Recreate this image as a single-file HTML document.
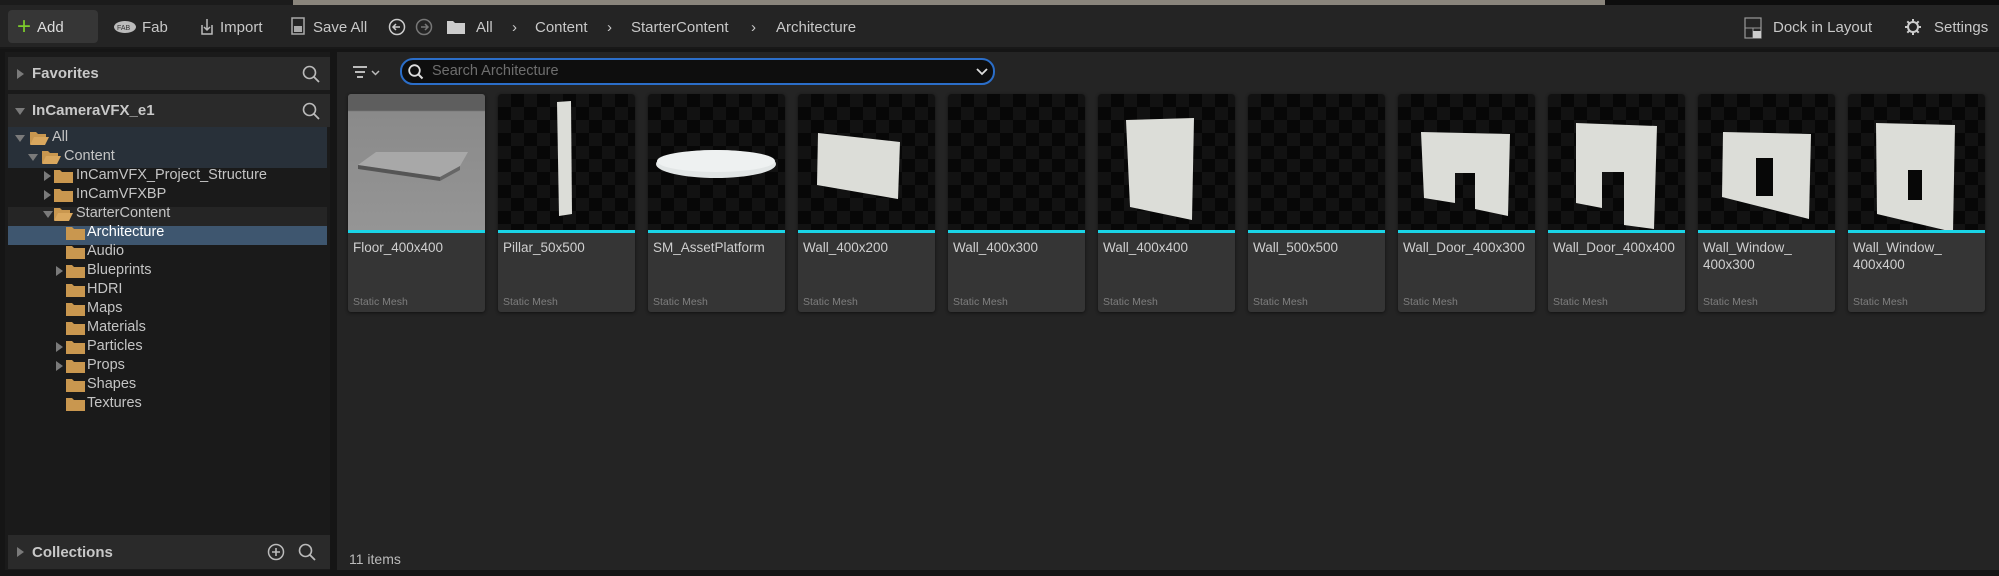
<!DOCTYPE html>
<html><head><meta charset="utf-8"><style>
*{margin:0;padding:0;box-sizing:border-box}
body{width:1999px;height:576px;background:#151515;font-family:"Liberation Sans",sans-serif;color:#c8c8c8;position:relative;overflow:hidden}
.abs{position:absolute}
.tb{left:0;top:5px;width:1999px;height:44px;background:#242424;border-bottom:2px solid #181818}
.tt{position:absolute;top:16px;font-size:15px;color:#c8c8c8;white-space:nowrap}
.left{left:5px;top:52px;width:325px;height:518px;background:#1a1a1a}
.hdr{position:absolute;left:3px;width:322px;height:33px;background:#2a2a2a;font-size:15px;font-weight:bold;color:#c8c8c8}
.row{position:absolute;left:3px;width:319px;height:19px;font-size:14.5px;color:#c4c4c4}
.row span{position:absolute;top:1px}
.fold{position:absolute;top:3px;width:19px;height:14px}
.arr{position:absolute;top:5px;width:0;height:0}
.ar{border-top:5px solid transparent;border-bottom:5px solid transparent;border-left:7px solid #7a7a7a}
.ad{border-left:5px solid transparent;border-right:5px solid transparent;border-top:7px solid #7a7a7a;top:7px}
.right{left:337px;top:52px;width:1662px;height:518px;background:#242424}
.tile{position:absolute;top:94px;width:137px;height:218px;background:#353535;border-radius:3px;overflow:hidden;box-shadow:0 1px 3px #111}
.th{position:absolute;left:0;top:0;width:137px;height:136px}
.cy{position:absolute;left:0;top:136px;width:137px;height:3px;background:#1ad4e6}
.nm{position:absolute;left:5px;top:145px;font-size:13.5px;color:#cfcfcf;line-height:17px;width:132px}
.sm{position:absolute;left:5px;top:202px;font-size:10.5px;color:#7e7e7e}
</style></head><body>
<div class="abs" style="left:0;top:0;width:1999px;height:5px;background:#1b1b1b"></div>
<div class="abs" style="left:293px;top:0;width:1312px;height:5px;background:#8a857c"></div>
<div class="abs" style="left:1605px;top:0;width:394px;height:5px;background:#0d0d0d"></div>
<div class="abs tb">
 <div class="abs" style="left:8px;top:5px;width:90px;height:33px;background:#363636;border-radius:4px"></div>
 <div class="tt" style="left:17px;top:8px;color:#7ccc2c;font-size:24px">+</div>
 <div class="tt" style="left:37px;top:14px;color:#ddd">Add</div>
 <svg class="abs" style="left:113px;top:15px" width="24" height="14"><ellipse cx="12" cy="7" rx="11" ry="6" fill="#bbb"/><text x="4" y="10" font-size="7" fill="#333" font-family="Liberation Sans">FAB</text></svg>
 <div class="tt" style="left:142px;top:14px">Fab</div>
 <svg class="abs" style="left:199px;top:12px" width="16" height="20"><path d="M3 8v9h10V8M8 2v11M5 10l3 3 3-3" stroke="#bbb" fill="none" stroke-width="1.5"/></svg>
 <div class="tt" style="left:220px;top:14px">Import</div>
 <svg class="abs" style="left:291px;top:12px" width="14" height="18"><rect x="1" y="1" width="12" height="16" fill="none" stroke="#aaa" stroke-width="1.5"/><rect x="3" y="9" width="8" height="6" fill="#aaa"/></svg>
 <div class="tt" style="left:313px;top:14px">Save All</div>
 <svg class="abs" style="left:388px;top:13px" width="46" height="18"><circle cx="9" cy="9" r="7.5" fill="none" stroke="#ccc" stroke-width="1.5"/><path d="M12 9H6M8 6L5 9l3 3" stroke="#ccc" fill="none" stroke-width="1.5"/><circle cx="36" cy="9" r="7.5" fill="none" stroke="#777" stroke-width="1.5"/><path d="M33 9h6M37 6l3 3-3 3" stroke="#777" fill="none" stroke-width="1.5"/></svg>
 <svg class="abs" style="left:446px;top:14px" width="20" height="16"><path d="M1 2h6l2 2h10v11H1z" fill="#ccc"/></svg>
 <div class="tt" style="left:476px;top:14px">All</div>
 <div class="tt" style="left:512px;top:14px">›</div>
 <div class="tt" style="left:535px;top:14px">Content</div>
 <div class="tt" style="left:607px;top:14px">›</div>
 <div class="tt" style="left:631px;top:14px">StarterContent</div>
 <div class="tt" style="left:751px;top:14px">›</div>
 <div class="tt" style="left:776px;top:14px">Architecture</div>
 <svg class="abs" style="left:1744px;top:12px" width="18" height="22"><rect x="1" y="1" width="16" height="20" fill="none" stroke="#999" stroke-width="1.2"/><path d="M1 11h16M9 11v10" stroke="#999"/><rect x="9" y="14" width="8" height="7" fill="#ccc"/></svg>
 <div class="tt" style="left:1773px;top:14px">Dock in Layout</div>
 <svg class="abs" style="left:1904px;top:13px" width="18" height="18"><circle cx="9" cy="9" r="5" fill="none" stroke="#ccc" stroke-width="2"/><path d="M9 1v3M9 14v3M1 9h3M14 9h3M3.3 3.3l2 2M12.7 12.7l2 2M3.3 14.7l2-2M12.7 5.3l2-2" stroke="#ccc" stroke-width="2"/></svg>
 <div class="tt" style="left:1934px;top:14px">Settings</div>
</div>

<div class="abs left">
 <div class="hdr" style="top:5px"><div class="abs arr ar" style="left:9px;top:12px"></div><span class="abs" style="left:24px;top:8px">Favorites</span>
 <svg class="abs" style="left:294px;top:8px" width="18" height="18"><circle cx="7.5" cy="7.5" r="6" fill="none" stroke="#bbb" stroke-width="1.6"/><path d="M12 12l5 5" stroke="#bbb" stroke-width="1.8"/></svg></div>
 <div class="hdr" style="top:42px"><div class="abs arr ad" style="left:7px;top:14px"></div><span class="abs" style="left:24px;top:8px">InCameraVFX_e1</span>
 <svg class="abs" style="left:294px;top:8px" width="18" height="18"><circle cx="7.5" cy="7.5" r="6" fill="none" stroke="#bbb" stroke-width="1.6"/><path d="M12 12l5 5" stroke="#bbb" stroke-width="1.8"/></svg></div>
 <div class="abs" style="left:3px;top:75px;width:319px;height:41px;background:#283039"></div>
 <div class="abs" style="left:3px;top:155px;width:319px;height:19px;background:#252525"></div>
 <div class="abs" style="left:3px;top:174px;width:319px;height:19px;background:#3e566f"></div>
 <div id="tree"></div>
 <div class="hdr" style="top:483px;height:34px"><div class="abs arr ar" style="left:9px;top:12px"></div><span class="abs" style="left:24px;top:9px">Collections</span>
 <svg class="abs" style="left:259px;top:8px" width="18" height="18"><circle cx="9" cy="9" r="7.5" fill="none" stroke="#bbb" stroke-width="1.5"/><path d="M9 5v8M5 9h8" stroke="#bbb" stroke-width="1.6"/></svg>
 <svg class="abs" style="left:290px;top:8px" width="18" height="18"><circle cx="7.5" cy="7.5" r="6" fill="none" stroke="#bbb" stroke-width="1.6"/><path d="M12 12l5 5" stroke="#bbb" stroke-width="1.8"/></svg></div>
</div>

<div class="abs right">
 <svg class="abs" style="left:16px;top:14px" width="28" height="14"><path d="M0 1h14M2 6h10M4 11h6" stroke="#bbb" stroke-width="2"/><path d="M19 5l3.5 3.5L26 5" stroke="#bbb" fill="none" stroke-width="1.5"/></svg>
 <div class="abs" style="left:63px;top:6px;width:595px;height:27px;background:#0e0e0e;border:2px solid #2b6ec9;border-radius:13px"></div>
 <svg class="abs" style="left:71px;top:12px" width="16" height="16"><circle cx="6.5" cy="6.5" r="5.3" fill="none" stroke="#ddd" stroke-width="1.8"/><path d="M10.5 10.5l4 4" stroke="#ddd" stroke-width="2"/></svg>
 <div class="abs" style="left:95px;top:11px;font-size:14.5px;color:#6e6e6e">Search Architecture</div>
 <svg class="abs" style="left:639px;top:16px" width="12" height="8"><path d="M1 1l5 5 5-5" stroke="#ddd" fill="none" stroke-width="1.8"/></svg>
 <div class="abs" style="left:12px;top:499px;font-size:14px;color:#bbb">11 items</div>
</div>
<div id="tiles"></div>
<script>
var T=[
["Floor_400x400","floor"],["Pillar_50x500","pillar"],["SM_AssetPlatform","plat"],["Wall_400x200","w2"],["Wall_400x300","none"],["Wall_400x400","w4"],["Wall_500x500","none"],["Wall_Door_400x300","d3"],["Wall_Door_400x400","d4"],["Wall_Window_<br>400x300","win3"],["Wall_Window_<br>400x400","win4"]];
var chk='<defs><pattern id="c" width="26" height="26" patternUnits="userSpaceOnUse"><rect width="26" height="26" fill="#070707"/><rect width="13" height="13" fill="#121212"/><rect x="13" y="13" width="13" height="13" fill="#121212"/></pattern></defs><rect width="137" height="136" fill="url(#c)"/>';
var W='#dcddd8';
var shapes={
floor:'<defs><linearGradient id="g" x1="0" y1="0" x2="0" y2="1"><stop offset="0" stop-color="#5e5e5e"/><stop offset=".12" stop-color="#5e5e5e"/><stop offset=".13" stop-color="#8a8a8a"/><stop offset="1" stop-color="#959595"/></linearGradient></defs><rect width="137" height="136" fill="url(#g)"/><path d="M10 71l18-13h92l-8 14-20 11z" fill="#a8a8a8"/><path d="M10 71l82 12v4l-82-12z" fill="#555"/><path d="M92 83l20-11v4l-20 11z" fill="#666"/>',
pillar:chk+'<path d="M59 8l14-1 1 113-13 2z" fill="'+W+'"/>',
plat:chk+'<ellipse cx="68" cy="70" rx="60" ry="14" fill="#e2e6e6"/><ellipse cx="68" cy="67" rx="59" ry="11" fill="#eef1f1"/>',
w2:chk+'<path d="M20 39l82 9-2 57-81-14z" fill="'+W+'"/>',
none:chk,
w4:chk+'<path d="M28 26l68-2-2 102-62-13z" fill="'+W+'"/>',
d3:chk+'<path d="M23 38l89 2-2 82-33-7v-36H57v30l-31-5z" fill="'+W+'"/>',
d4:chk+'<path d="M28 29l81 3-3 103-30-4V78H54v36l-26-5z" fill="'+W+'"/>',
win3:chk+'<path d="M25 38l88 2-2 85-87-22z" fill="'+W+'"/><rect x="58" y="64" width="17" height="38" fill="#070707"/>',
win4:chk+'<path d="M28 29l79 2-2 107-76-18z" fill="'+W+'"/><rect x="60" y="76" width="14" height="30" fill="#070707"/>'};
var h='';
T.forEach(function(t,i){var x=348+150*i;
h+='<div class="tile" style="left:'+x+'px"><svg class="th" width="137" height="136">'+shapes[t[1]].replace(/id="c"/g,'id="c'+i+'"').replace(/url\(#c\)/g,'url(#c'+i+')')+'</svg><div class="cy"></div><div class="nm">'+t[0]+'</div><div class="sm">Static Mesh</div></div>';});
document.getElementById('tiles').innerHTML=h;
var R=[["All",0,"d",1],["Content",1,"d",1],["InCamVFX_Project_Structure",2,"r",0],["InCamVFXBP",2,"r",0],["StarterContent",2,"d",1],["Architecture",3,"",0],["Audio",3,"",0],["Blueprints",3,"r",0],["HDRI",3,"",0],["Maps",3,"",0],["Materials",3,"",0],["Particles",3,"r",0],["Props",3,"r",0],["Shapes",3,"",0],["Textures",3,"",0]];
var ax=[7,20,35,47],fx=[22,34,46,58],tx=[44,56,68,79];
var s='';
R.forEach(function(r,i){var y=76+19*i,l=r[1];
s+='<div class="row" style="top:'+y+'px">';
if(r[2]=='d')s+='<div class="arr ad" style="left:'+ax[l]+'px"></div>';
if(r[2]=='r')s+='<div class="arr ar" style="left:'+(ax[l]+1)+'px"></div>';
s+='<svg class="fold" style="left:'+fx[l]+'px" width="19" height="14">'+(r[3]?'<path d="M0 1h6l2 2h8v3H5L1 13H0z" fill="#c9974f"/><path d="M4 6h15l-4 8H0z" fill="#d9a75e"/>':'<path d="M0 1h6l2 2h11v11H0z" fill="#c9974f"/>')+'</svg>';
s+='<span style="left:'+tx[l]+'px;'+(i==5?'color:#fff':'')+'">'+r[0]+'</span></div>';});
document.getElementById('tree').innerHTML=s;
</script>
</body></html>
